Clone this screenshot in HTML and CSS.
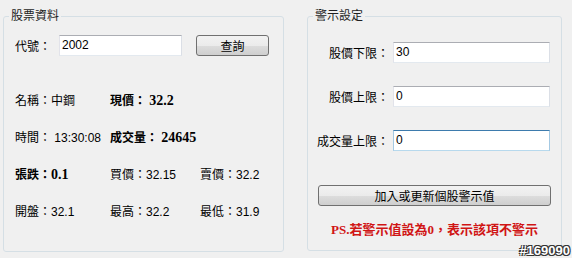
FILE: index.html
```html
<!DOCTYPE html>
<html lang="zh-TW">
<head>
    <meta charset="UTF-8">
    <title>股票警示</title>
    <link rel="stylesheet" href="styles.css">
</head>
<body>
    <div id="window">
        <fieldset class="group" id="stock-box">
            <legend>股票資料</legend>
            <div id="query-row">
                <label for="code">代號：</label>
                <input type="text" id="code" class="textbox" value="2002">
                <button id="query-btn" class="win-btn">查詢</button>
            </div>
            <div id="quote">
                <div>名稱：中鋼</div>
                <div class="strong">現價： <span class="num">32.2</span></div>
                <div></div>
                <div>時間： 13:30:08</div>
                <div class="strong">成交量： <span class="num">24645</span></div>
                <div></div>
                <div class="strong">張跌：<span class="num">0.1</span></div>
                <div>買價：32.15</div>
                <div>賣價：32.2</div>
                <div>開盤：32.1</div>
                <div>最高：32.2</div>
                <div>最低：31.9</div>
            </div>
        </fieldset>
        <fieldset class="group" id="alert-box">
            <legend>警示設定</legend>
            <div class="field">
                <label for="low">股價下限：</label>
                <input type="text" id="low" class="textbox" value="30">
            </div>
            <div class="field">
                <label for="high">股價上限：</label>
                <input type="text" id="high" class="textbox" value="0">
            </div>
            <div class="field">
                <label for="vol">成交量上限：</label>
                <input type="text" id="vol" class="textbox focused" value="0">
            </div>
            <button id="save-btn" class="win-btn">加入或更新個股警示值</button>
            <div id="note">PS.若警示值設為0，表示該項不警示</div>
        </fieldset>
    </div>
    <div id="mark">#169090</div>
</body>
</html>
```

FILE: styles.css
```css
body {
    margin: 0;
    background-color: #f0f0f0;
    font-family: "Liberation Sans", "Noto Sans CJK TC", sans-serif;
    font-size: 12px;
    color: #000;
}
#window {
    display: flex;
    padding-left: 3px;
}
.group {
    box-sizing: border-box;
    margin: 9px 0 0;
    padding: 0;
    border: 1px solid #d5dfe5;
    border-radius: 3px;
    height: 243px;
}
.group legend {
    margin-left: 5px;
    padding: 0 2px;
    line-height: 14px;
    font-size: 12px;
    color: #1e1e1e;
}
#stock-box {
    width: 281px;
}
#alert-box {
    width: 255px;
    height: 242px;
    margin-left: 23px;
}
.textbox {
    box-sizing: border-box;
    height: 21px;
    margin: 0;
    padding: 0 2px 2px;
    border: 1px solid;
    border-color: #abadb3 #dbdfe6 #e3e9ef #e2e3ea;
    background-color: #fff;
    font-family: "Liberation Sans", "Noto Sans CJK TC", sans-serif;
    font-size: 12px;
    outline: none;
}
.textbox.focused {
    border-color: #3d7bad #a4c9e3 #b7d9ed #a4c9e3;
}
.win-btn {
    box-sizing: border-box;
    height: 21px;
    margin: 0;
    padding: 0;
    border: 1px solid #707070;
    border-radius: 3px;
    background: linear-gradient(#f2f2f2 0%, #ebebeb 50%, #dddddd 51%, #cfcfcf 100%);
    font-family: "Liberation Sans", "Noto Sans CJK TC", sans-serif;
    font-size: 12px;
    color: #000;
}
#query-row {
    display: flex;
    align-items: center;
    margin-top: 12px;
    padding-left: 11px;
}
#query-row label {
    width: 44px;
}
#code {
    width: 123px;
}
#query-btn {
    width: 73px;
    margin-left: 14px;
}
#quote {
    display: grid;
    grid-template-columns: 95px 90px auto;
    grid-auto-rows: 37px;
    align-items: center;
    margin-top: 25px;
    padding-left: 11px;
    white-space: nowrap;
}
#quote .strong {
    font-weight: bold;
}
#quote .num {
    font-family: "Liberation Serif", serif;
    font-size: 14px;
}
#alert-box .field {
    display: flex;
    align-items: center;
    justify-content: flex-end;
    padding-right: 11px;
    margin-top: 23px;
}
#alert-box .field:first-of-type {
    margin-top: 19px;
}
#alert-box .field label {
    margin-right: 4px;
}
#alert-box .field .textbox {
    width: 157px;
}
#save-btn {
    display: block;
    width: 233px;
    margin: 34px 0 0 10px;
}
#note {
    width: 233px;
    margin: 16px 0 0 10px;
    text-align: center;
    line-height: 16px;
    font-family: "Liberation Serif", "Noto Sans CJK TC", serif;
    font-size: 13px;
    font-weight: bold;
    color: #d01515;
}
#mark {
    position: absolute;
    right: 2px;
    top: 243px;
    font-family: "Liberation Sans", sans-serif;
    font-size: 13px;
    font-weight: bold;
    color: #fff;
    text-shadow: -1px -1px 0 #333, 1px -1px 0 #333, -1px 1px 0 #333, 1px 1px 0 #333;
}
```
